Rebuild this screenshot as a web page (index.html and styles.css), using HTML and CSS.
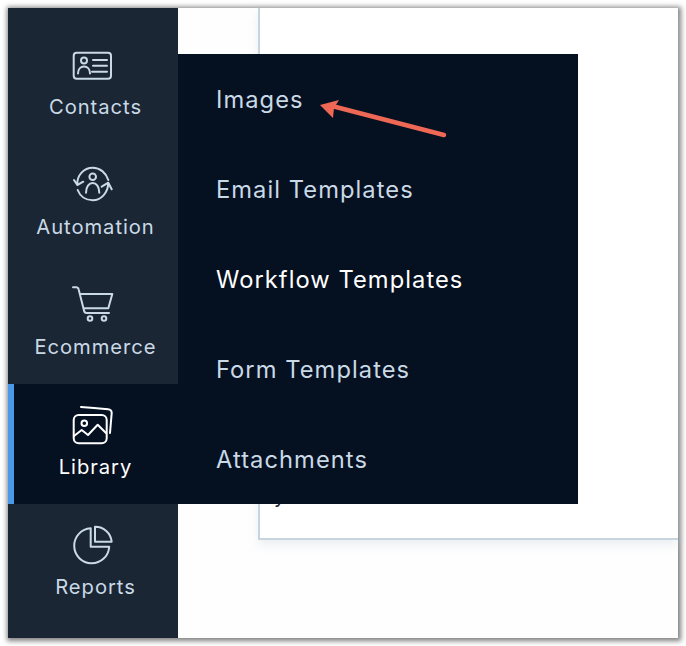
FILE: index.html
```html
<!DOCTYPE html>
<html lang="en">
<head>
<meta charset="utf-8">
<title>Library menu</title>
<link rel="stylesheet" href="styles.css">
</head>
<body>
<div class="window">
  <nav class="sidebar">
    <a class="nav-item">
      <svg class="nav-icon" viewBox="0 0 40 40"><rect x="0.7" y="6.7" width="37.3" height="26" rx="3"/><circle cx="11" cy="14.5" r="3"/><path d="M5 27.5c0-4.5 2.6-7 6-7s6 2.500 6 7M20 14h14M20 19.700h14M19 25.700h15"/></svg>
      <span class="nav-label">Contacts</span>
    </a>
    <a class="nav-item">
      <svg class="nav-icon" viewBox="0 0 40 40"><circle cx="19.700" cy="10.700" r="3.300"/><path d="M13 26.700c0-6 3-9.700 6.700-9.700s6.600 3.700 6.600 9.700M4.300 19C3.800 9 11 1.700 19.700 1.700c7.300 0 13.300 5 15.600 12.300M35.300 17C35 27 28 34.300 19.700 34.300c-7 0-12.700-4-15-10.300M1 14l3.300 5 6-3.300M28.700 20.700l6.600-4 3.400 6.600"/></svg>
      <span class="nav-label">Automation</span>
    </a>
    <a class="nav-item">
      <svg class="nav-icon" viewBox="0 0 40 40"><circle cx="17" cy="32.500" r="2.300"/><circle cx="31" cy="32.500" r="2.300"/><path d="M0 1.300h3c1.500 0 2.300.7 2.600 2L11 24.500c.3 1.500 1 2.500 2.500 2.500H36M7 8h32.300l-4 14.300H10.500"/></svg>
      <span class="nav-label">Ecommerce</span>
    </a>
    <a class="nav-item is-active">
      <svg class="nav-icon" viewBox="0 0 40 40"><rect x="0.700" y="9" width="33" height="28.300" rx="5"/><circle cx="11.300" cy="17.300" r="2.800"/><path d="M1 30l7.700-6 6.300 5 9.700-10.300 8.300 8.300M8 1c9 .5 18 1.300 27 2.300 2.500.3 3.700 1.500 3.700 3.700L37 27"/></svg>
      <span class="nav-label">Library</span>
    </a>
    <a class="nav-item">
      <svg class="nav-icon" viewBox="0 0 40 40"><path d="M17.700 2.300A17.500 17.500 0 1 0 36.200 20.700H17.700Z"/><path d="M22 0.700A16.500 16.500 0 0 1 38.700 15.700H22Z"/></svg>
      <span class="nav-label">Reports</span>
    </a>
  </nav>
  <main class="content">
    <div class="card"><span class="card-text">y</span></div>
  </main>
  <ul class="flyout">
    <li class="flyout-item">Images</li>
    <li class="flyout-item">Email Templates</li>
    <li class="flyout-item is-current">Workflow Templates</li>
    <li class="flyout-item">Form Templates</li>
    <li class="flyout-item">Attachments</li>
  </ul>
  <svg class="callout" viewBox="0 0 130 44"><path class="callout-shaft" d="M124 35L12 6"/><path class="callout-head" d="M0 5L19 0L14 8L13 18Z"/></svg>
</div>
</body>
</html>
```
FILE: styles.css
```css
* {
  box-sizing: border-box;
}

html,
body {
  margin: 0;
  background: #fff;
}

body {
  padding: 8px;
  font-family: "Inter", "Liberation Sans", sans-serif;
}

.window {
  position: relative;
  display: flex;
  width: 670px;
  height: 630px;
  background: #fefefe;
  box-shadow: 1px 1px 5px 2px rgba(0, 0, 0, 0.5);
}

.sidebar {
  flex: 0 0 170px;
  padding-top: 16px;
  background: #1b2634;
}

.nav-item {
  display: flex;
  flex-direction: column;
  align-items: flex-start;
  height: 120px;
  padding-top: 22px;
  color: #c9d9e6;
}

.nav-item.is-active {
  background: #051020;
  box-shadow: inset 6px 0 0 #4a98e8;
  color: #fff;
}

.nav-icon {
  width: 40px;
  height: 40px;
  margin-left: 65px;
  overflow: visible;
  fill: none;
  stroke: currentColor;
  stroke-width: 2;
  stroke-linecap: round;
  stroke-linejoin: round;
}

.nav-label {
  align-self: center;
  margin-top: 8px;
  margin-left: 5px;
  font-size: 20.200px;
  line-height: 26px;
  letter-spacing: 0.950px;
}

.content {
  flex: 1;
  padding-left: 80px;
  height: 100%;
  background: #fefefe;
}

.card {
  height: 532px;
  padding: 476px 0 0 14px;
  background: #fff;
  border-left: 2px solid #c9d5de;
  border-bottom: 2px solid #c9d5de;
  box-shadow: 0 5px 10px rgba(201, 213, 222, 0.35);
}

.card-text {
  font-size: 20px;
  color: #1b2634;
}

.flyout {
  position: absolute;
  top: 46px;
  left: 170px;
  width: 400px;
  height: 450px;
  margin: 0;
  padding: 0;
  list-style: none;
  background: #051020;
}

.flyout-item {
  display: flex;
  align-items: center;
  height: 90px;
  padding: 0 0 0 38px;
  font-size: 23.700px;
  letter-spacing: 1.060px;
  color: #c9d9e6;
}

.flyout-item.is-current {
  color: #fff;
}

.callout {
  position: absolute;
  top: 92px;
  left: 312px;
  width: 130px;
  height: 44px;
  overflow: visible;
}

.callout-shaft {
  fill: none;
  stroke: #ef6855;
  stroke-width: 4.500;
  stroke-linecap: round;
}

.callout-head {
  fill: #ef6855;
}
```
